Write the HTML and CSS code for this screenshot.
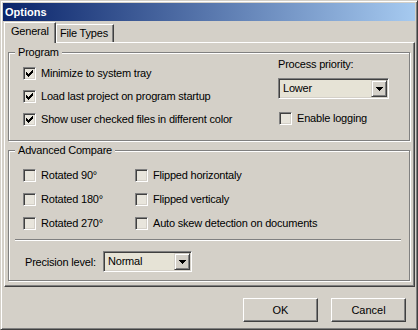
FILE: index.html
```html
<!DOCTYPE html>
<html lang="en">
<head>
	<meta charset="UTF-8">
	<title>Options</title>
<link rel="stylesheet" href="styles.css">
</head>
<body>
<div class="window">
	<div class="titlebar">Options</div>
	<div class="tabs">
		<div class="tab active">General</div>
		<div class="tab">File Types</div>
	</div>
	<div class="panel">
		<fieldset class="group program">
			<legend>Program</legend>
			<div class="program-body">
				<div class="checks">
					<label class="check"><span class="box"><svg width="7" height="7" viewBox="0 0 7 7"><path d="M6 0h1v1h-1zM5 1h2v1h-2zM0 2h1v1h-1zM4 2h3v1h-3zM0 3h2v1h-2zM3 3h3v1h-3zM0 4h5v1h-5zM1 5h3v1h-3zM2 6h1v1h-1z"/></svg></span>Minimize to system tray</label>
					<label class="check"><span class="box"><svg width="7" height="7" viewBox="0 0 7 7"><path d="M6 0h1v1h-1zM5 1h2v1h-2zM0 2h1v1h-1zM4 2h3v1h-3zM0 3h2v1h-2zM3 3h3v1h-3zM0 4h5v1h-5zM1 5h3v1h-3zM2 6h1v1h-1z"/></svg></span>Load last project on program startup</label>
					<label class="check"><span class="box"><svg width="7" height="7" viewBox="0 0 7 7"><path d="M6 0h1v1h-1zM5 1h2v1h-2zM0 2h1v1h-1zM4 2h3v1h-3zM0 3h2v1h-2zM3 3h3v1h-3zM0 4h5v1h-5zM1 5h3v1h-3zM2 6h1v1h-1z"/></svg></span>Show user checked files in different color</label>
				</div>
				<div class="side">
					<div class="side-label">Process priority:</div>
					<div class="combo priority">
						<span class="combo-text">Lower</span>
						<span class="combo-btn"><svg width="7" height="4" viewBox="0 0 7 4"><path d="M0 0h7v1h-7zM1 1h5v1h-5zM2 2h3v1h-3zM3 3h1v1h-1z"/></svg></span>
					</div>
					<label class="check logging"><span class="box"></span>Enable logging</label>
				</div>
			</div>
		</fieldset>
		<fieldset class="group advanced">
			<legend>Advanced Compare</legend>
			<div class="adv-body">
				<div class="adv-grid">
					<label class="check"><span class="box"></span>Rotated 90°</label>
					<label class="check"><span class="box"></span>Flipped horizontaly</label>
					<label class="check"><span class="box"></span>Rotated 180°</label>
					<label class="check"><span class="box"></span>Flipped verticaly</label>
					<label class="check"><span class="box"></span>Rotated 270°</label>
					<label class="check"><span class="box"></span>Auto skew detection on documents</label>
				</div>
				<div class="sep"></div>
				<div class="precision">
					<span class="precision-label">Precision level:</span>
					<div class="combo level">
						<span class="combo-text">Normal</span>
						<span class="combo-btn"><svg width="7" height="4" viewBox="0 0 7 4"><path d="M0 0h7v1h-7zM1 1h5v1h-5zM2 2h3v1h-3zM3 3h1v1h-1z"/></svg></span>
					</div>
				</div>
			</div>
		</fieldset>
	</div>
	<div class="buttons">
		<button class="btn">OK</button>
		<button class="btn">Cancel</button>
	</div>
</div>
</body>
</html>
```
FILE: styles.css
```css
*{margin:0;padding:0;box-sizing:border-box;}
body{background:#d4d0c8;font:11px "Liberation Sans",Arial,sans-serif;letter-spacing:-0.2px;color:#000;}
.window{width:418px;height:330px;padding:2px;background:#d4d0c8;border:1px solid;border-color:#d4d0c8 #404040 #404040 #d4d0c8;box-shadow:inset 1px 1px #fff,inset -1px -1px #808080;display:flex;flex-direction:column;}
.titlebar{height:18px;line-height:18px;padding-left:2px;font-weight:bold;letter-spacing:0;color:#fff;background:linear-gradient(to right,#0a246a,#a6caf0);}

/* tabs */
.tabs{display:flex;align-items:flex-end;height:20px;margin:1px 0 0 1px;}
.tab{width:58px;height:18px;padding:2px 0 0 3px;line-height:13px;white-space:nowrap;border:1px solid;border-bottom:0;border-color:#fff #404040 #fff #fff;box-shadow:inset -1px 0 #808080;}
.tab.active{width:52px;height:21px;padding-left:6px;margin-bottom:-1px;position:relative;z-index:1;background:#d4d0c8;}

.panel{height:245px;margin-left:1px;padding:3px 4px 5px 3px;border:1px solid;border-color:#fff #404040 #404040 #fff;box-shadow:inset -1px -1px #808080;}

/* group boxes */
.group{margin:0;padding:0;min-width:0;border:1px solid #808080;box-shadow:inset 1px 1px #fff,1px 1px #fff;}
.group legend{margin-left:6px;padding:0 3px;line-height:13px;background:#d4d0c8;}
.advanced{margin-top:3px;}

.program-body{display:flex;justify-content:space-between;height:81px;padding:8px 20px 0 14px;}
.checks{display:flex;flex-direction:column;gap:10px;}
.check{display:flex;align-items:center;gap:5px;height:13px;line-height:13px;white-space:nowrap;}
.box{flex:none;width:13px;height:13px;padding:1px;background:#e8e5dc;border:1px solid;border-color:#808080 #fff #fff #808080;box-shadow:inset 1px 1px #404040,inset -1px -1px #d4d0c8;}
.box svg{display:block;margin:1px;}

.side{width:111px;margin-top:-9px;}
.side-label{line-height:13px;}
.logging{margin:13px 0 0 1px;}

/* combo boxes */
.combo{display:flex;height:21px;padding:1px;background:#e6e3d6;border:1px solid;border-color:#808080 #fff #fff #808080;box-shadow:inset 1px 1px #404040,inset -1px -1px #d4d0c8;}
.priority{margin-top:7px;}
.combo-text{flex:1;padding-left:3px;line-height:17px;}
.combo-btn{flex:none;display:flex;align-items:center;justify-content:center;width:16px;height:17px;background:#d4d0c8;border:1px solid;border-color:#d4d0c8 #404040 #404040 #d4d0c8;box-shadow:inset 1px 1px #fff,inset -1px -1px #808080;}
.combo-btn svg{display:block;}

.adv-body{padding:12px 0 8px 0;}
.adv-grid{display:grid;grid-template-columns:112px auto;row-gap:11px;padding-left:14px;}
.sep{height:2px;margin:9px 8px 0 6px;border-top:1px solid #808080;border-bottom:1px solid #fff;}
.precision{display:flex;align-items:center;margin-top:10px;padding-left:16px;}
.precision-label{width:78px;}
.level{width:89px;}

/* dialog buttons */
.buttons{display:flex;justify-content:flex-end;gap:13px;margin-top:11px;padding-right:9px;}
.btn{width:75px;height:24px;font:inherit;color:#000;background:#d4d0c8;border:1px solid;border-color:#fff #404040 #404040 #fff;box-shadow:inset -1px -1px #808080;}
```
